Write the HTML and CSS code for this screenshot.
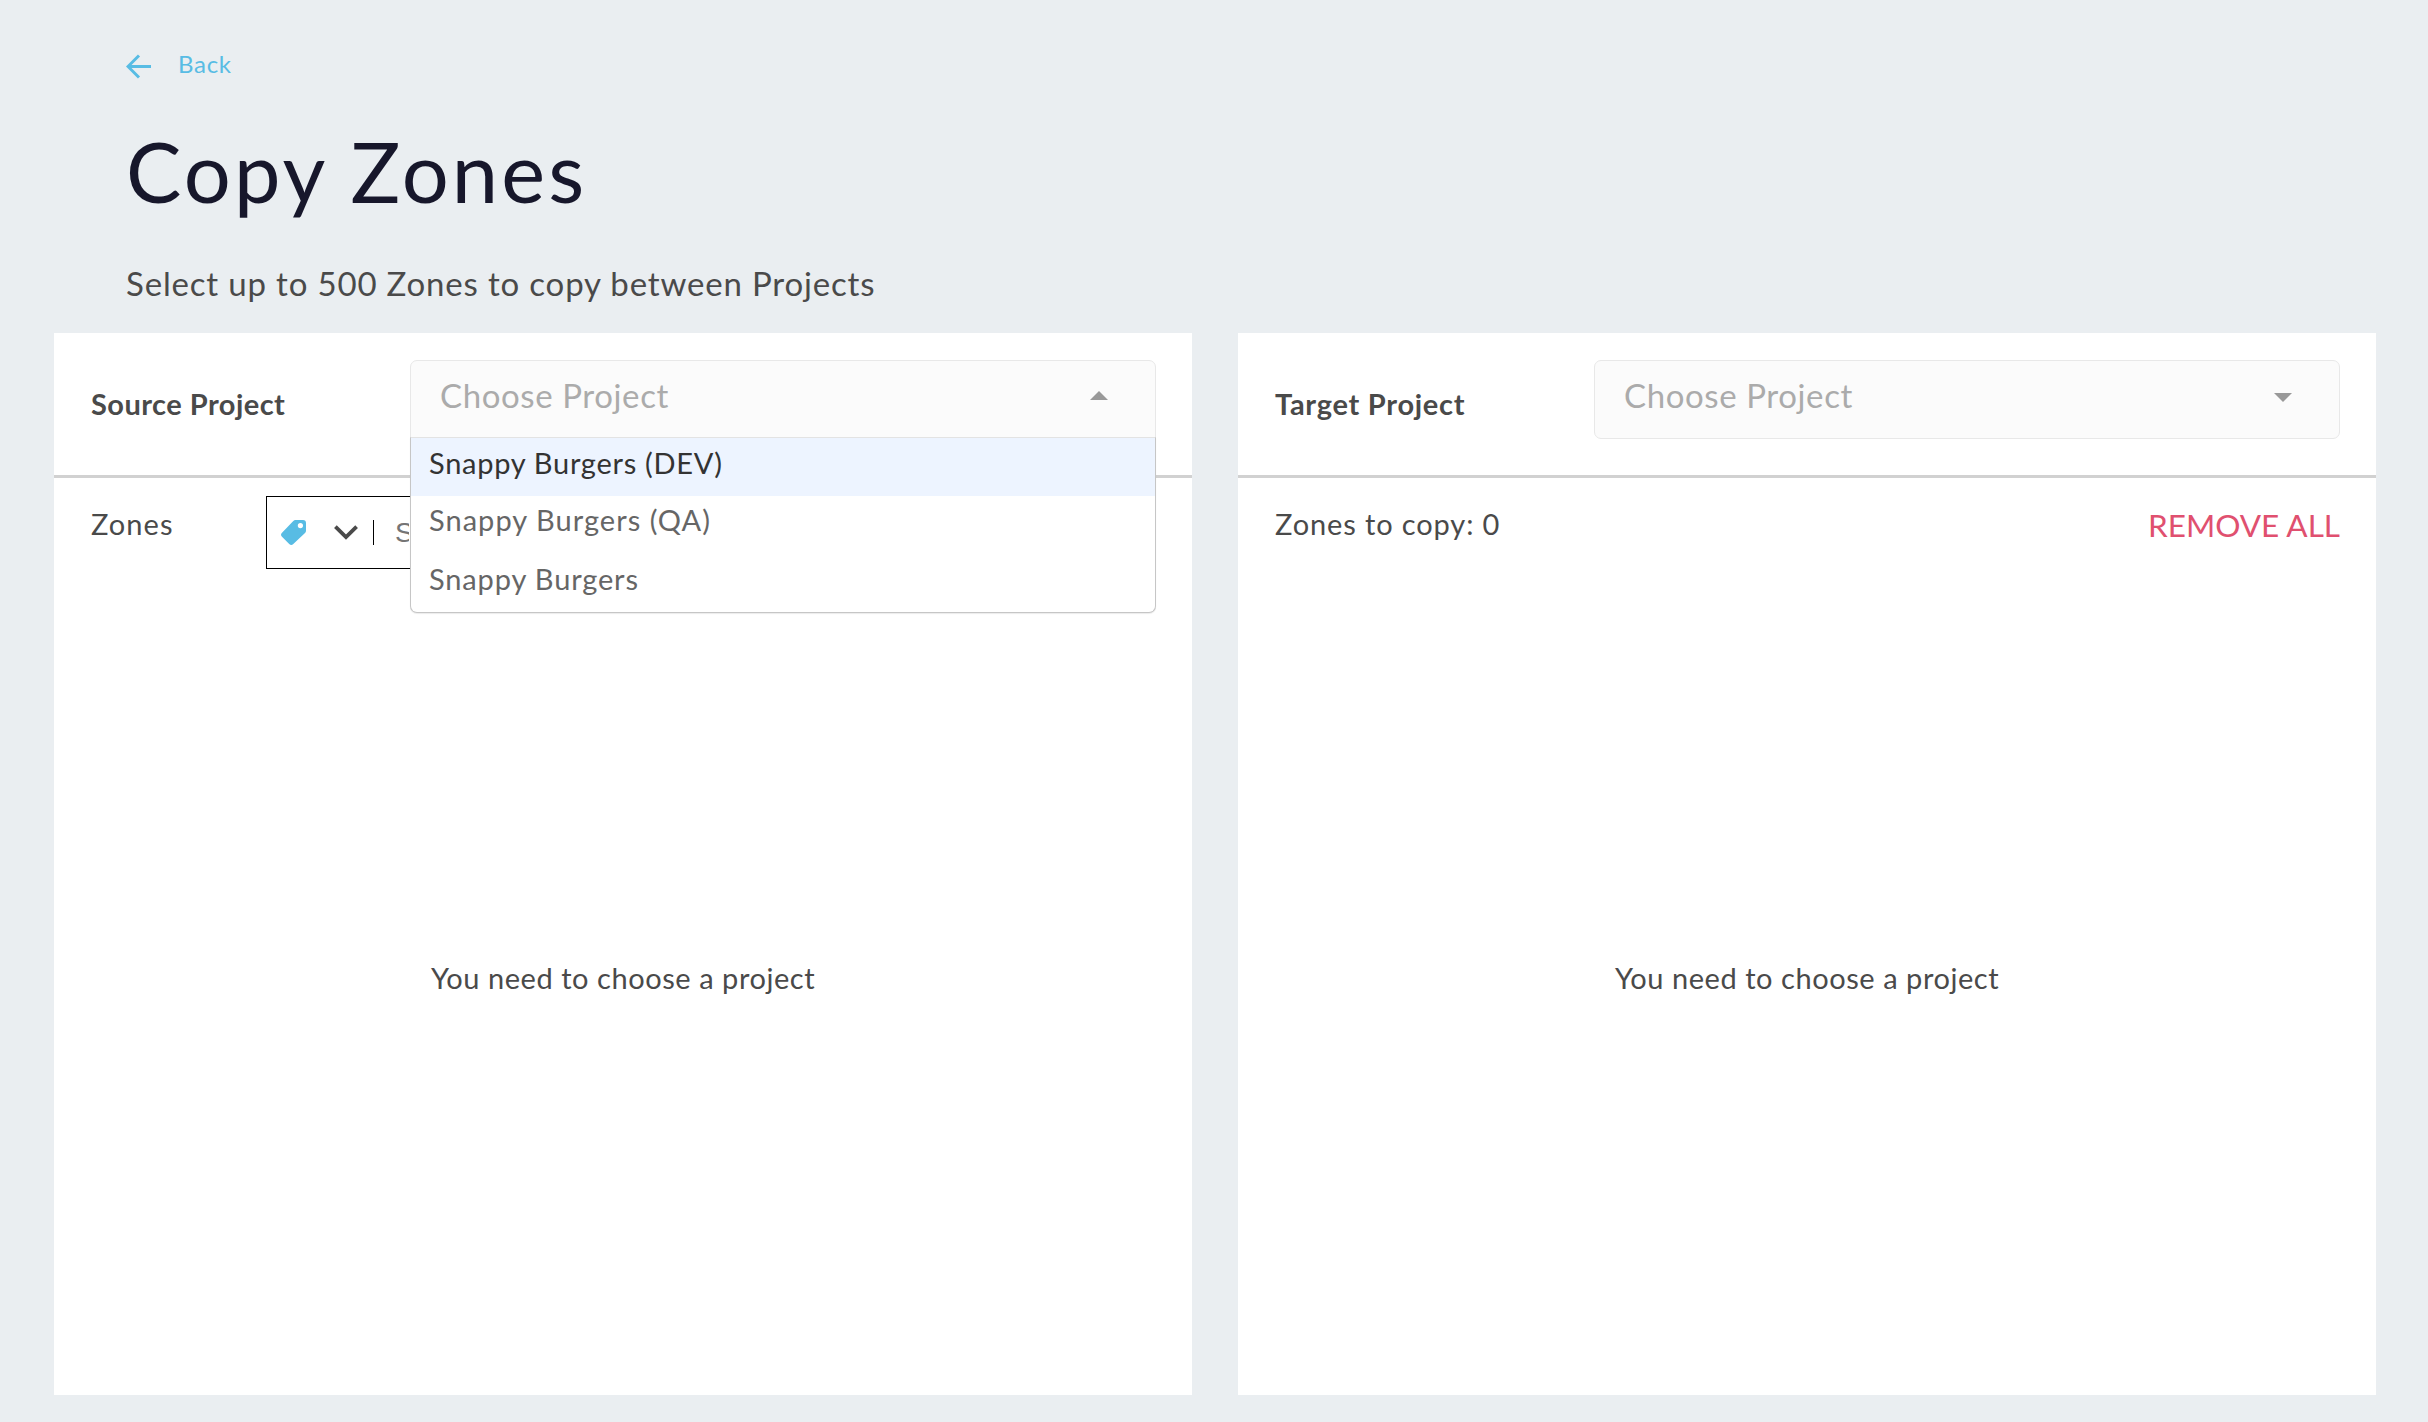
FILE: index.html
```html
<!DOCTYPE html>
<html lang="en">
<head>
<meta charset="utf-8">
<title>Copy Zones</title>
<link rel="stylesheet" href="styles.css">
</head>
<body>
<header class="page-head">
  <a class="back">
    <svg class="back-icon" viewBox="0 0 25 25"><path d="M25 12.5H2.5M13 1.5L2 12.5L13 23.5" fill="none" stroke="currentColor" stroke-width="3"/></svg>
    <span>Back</span>
  </a>
  <h1 class="title">Copy Zones</h1>
  <p class="subtitle">Select up to 500 Zones to copy between Projects</p>
</header>
<main class="panels">
  <section class="panel">
    <div class="panel-head">
      <h2 class="label">Source Project</h2>
      <div class="select select-open">
        <span class="placeholder">Choose Project</span>
        <svg class="caret caret-up" viewBox="0 0 18 9"><path d="M0 9L9 0L18 9Z" fill="#999"/></svg>
        <ul class="menu">
          <li class="option option-active dev">Snappy Burgers (DEV)</li>
          <li class="option qa">Snappy Burgers (QA)</li>
          <li class="option">Snappy Burgers</li>
        </ul>
      </div>
    </div>
    <div class="tools">
      <span class="zones">Zones</span>
      <div class="search">
        <svg class="tag" viewBox="0 0 25 25"><path fill-rule="evenodd" d="M14.3 0H22Q25 0 25 3V10.7Q25 12 24 13L12.3 24Q10.3 26 8.2 24L1 16.8Q-1 14.7 1 12.7L12.3 1Q13.3 0 14.3 0ZM19.4 3A2.6 2.6 0 1 0 19.4 8.2A2.6 2.6 0 1 0 19.4 3Z" fill="#58bce4"/></svg>
        <svg class="chevron" viewBox="0 0 24 15"><path d="M1.4 1.6L12 12L22.6 1.6" fill="none" stroke="#4a4a4a" stroke-width="3.8"/></svg>
        <span class="divider"></span>
        <span class="search-hint">S</span>
      </div>
    </div>
    <p class="empty">You need to choose a project</p>
  </section>
  <section class="panel">
    <div class="panel-head">
      <h2 class="label target">Target Project</h2>
      <div class="select">
        <span class="placeholder">Choose Project</span>
        <svg class="caret" viewBox="0 0 18 9"><path d="M0 0L9 9L18 0Z" fill="#999"/></svg>
      </div>
    </div>
    <div class="tools">
      <span class="count">Zones to copy: 0</span>
      <a class="remove">REMOVE ALL</a>
    </div>
    <p class="empty">You need to choose a project</p>
  </section>
</main>
</body>
</html>
```
FILE: styles.css
```css
* { box-sizing: border-box; }
body {
  margin: 0;
  height: 1422px;
  background: #eaeef1;
  color: #4a4a4a;
  font-family: Lato, sans-serif;
  font-size: 29px;
  line-height: 36px;
  font-variant-ligatures: none;
}
h1, h2, p, ul { margin: 0; padding: 0; }
.page-head { height: 333px; padding: 50px 0 0 126px; }
.back {
  display: flex;
  align-items: flex-start;
  height: 30px;
  color: #58bce4;
  font-size: 24px;
  line-height: 27px;
  letter-spacing: 0.7px;
}
.back-icon { width: 25px; height: 25px; margin: 4px 27px 0 0; }
.title {
  margin-top: 43px;
  color: #17172b;
  font-size: 83px;
  font-weight: 400;
  line-height: 96px;
  letter-spacing: 3.1px;
}
.subtitle {
  margin-top: 44px;
  font-size: 33px;
  line-height: 40px;
  letter-spacing: 0.825px;
}
.panels {
  display: grid;
  grid-template-columns: 1138px 1138px;
  gap: 46px;
  height: 1062px;
  padding-left: 54px;
}
.panel { display: flex; flex-direction: column; background: #fff; }
.panel-head {
  display: flex;
  align-items: flex-start;
  justify-content: space-between;
  height: 145px;
  padding: 27px 36px 0 37px;
  border-bottom: 3px solid #d1d1d1;
}
.label {
  margin-top: 26px;
  font-size: 29px;
  font-weight: 700;
  letter-spacing: 0.46px;
}
.target { letter-spacing: 0.72px; }
.select {
  position: relative;
  display: flex;
  justify-content: space-between;
  width: 746px;
  height: 79px;
  padding: 14px 47px 0 29px;
  background: #fbfbfb;
  border: 1px solid #e8e8e8;
  border-radius: 7px;
}
.select-open { border-radius: 7px 7px 0 0; }
.placeholder {
  color: #ababab;
  font-size: 33px;
  line-height: 40px;
  letter-spacing: 0.6px;
}
.caret { width: 18px; height: 9px; margin-top: 18px; }
.caret-up { margin-top: 16px; }
.menu {
  position: absolute;
  z-index: 1;
  top: 76px;
  left: -1px;
  width: 746px;
  height: 176px;
  overflow: hidden;
  background: #fff;
  border: 1px solid #c6c6c6;
  border-top-color: #e3e3e3;
  border-radius: 0 0 7px 7px;
  box-shadow: 0 1px 1px rgba(0, 0, 0, 0.08);
  list-style: none;
}
.option {
  height: 58px;
  padding: 7px 0 0 18px;
  color: #666;
  letter-spacing: 0.86px;
}
.option-active { color: #333; background: #edf4ff; }
.dev { letter-spacing: 0.72px; }
.qa { padding-top: 6px; letter-spacing: 1.03px; }
.tools {
  display: flex;
  align-items: flex-start;
  height: 91px;
  padding: 18px 36px 0 37px;
}
.zones { width: 175px; margin-top: 10px; letter-spacing: 1.07px; }
.count { margin-top: 10px; letter-spacing: 0.88px; }
.remove {
  margin: 11px 0 0 auto;
  color: #e0506f;
  font-size: 31.5px;
  letter-spacing: 0;
}
.search {
  display: flex;
  align-items: flex-start;
  width: 890px;
  height: 73px;
  padding: 23px 0 0 14px;
  border: 1px solid #000;
}
.tag { width: 25px; height: 25px; }
.chevron { width: 24px; height: 15px; margin: 5px 0 0 28px; }
.divider { width: 1px; height: 25px; margin-left: 15px; background: #000; }
.search-hint {
  width: 14px;
  margin: -3px 0 0 21px;
  overflow: hidden;
  color: #757575;
  font: 28px/32px "Liberation Sans", sans-serif;
}
.empty {
  flex: 1;
  display: flex;
  align-items: center;
  justify-content: center;
  padding-bottom: 9px;
  letter-spacing: 0.55px;
}
```
